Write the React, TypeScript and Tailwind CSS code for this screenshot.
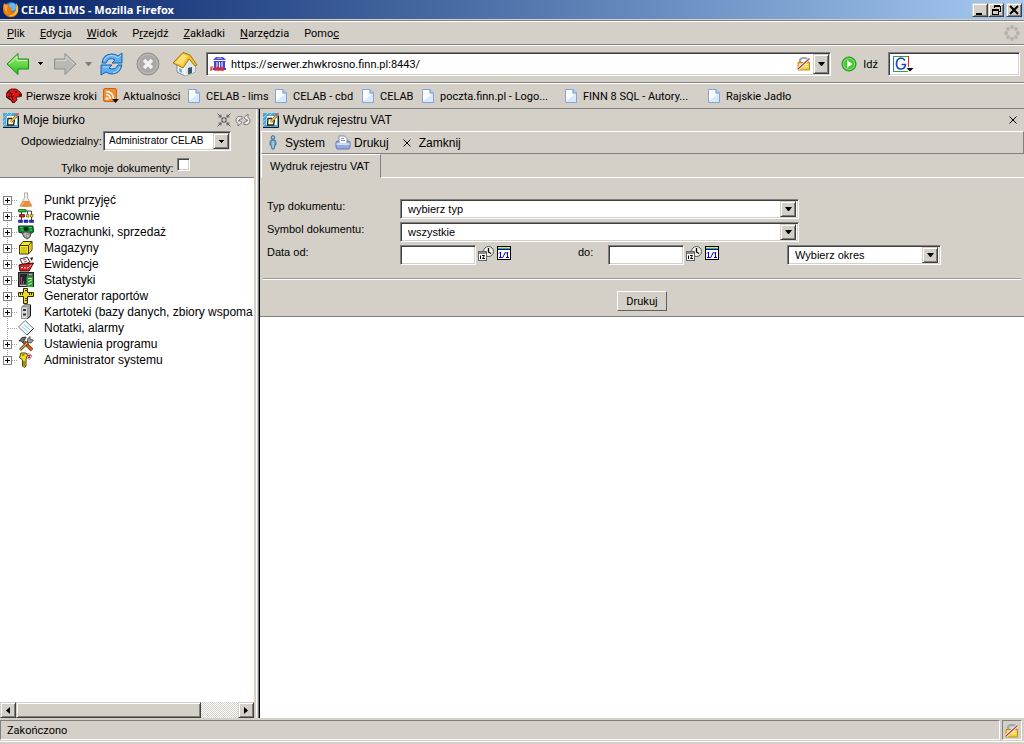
import { useState } from "react";
import type { ReactNode } from "react";

// ─── Shared bevels ─────────────────────────────────────────────────────────────

const SUNKEN =
  "border border-t-[#808080] border-l-[#808080] border-r-white border-b-white p-px shadow-[inset_1px_1px_0_#404040,inset_-1px_-1px_0_#d4d0c8]";
const RAISED =
  "border border-t-[#d4d0c8] border-l-[#d4d0c8] border-r-[#404040] border-b-[#404040] bg-[#d4d0c8] shadow-[inset_1px_1px_0_#ffffff,inset_-1px_-1px_0_#808080]";

// ─── Browser icons ─────────────────────────────────────────────────────────────

function FirefoxIcon() {
  return (
    <svg width="18" height="18" viewBox="0 0 18 18" aria-hidden>
      <circle cx="9" cy="8" r="7" fill="#2b6fc4" />
      <circle cx="10" cy="6" r="4" fill="#6db7ee" />
      <path d="M2 2 Q4 4 6 3 Q8 4 7 6 L10 7 Q8 10 11 11 Q15 10 14 5 Q18 9 15 13 Q12 17 7 16 Q1 14 1 8 Q1 4 2 2Z" fill="#e87a12" />
      <path d="M14 2 Q18 7 15 12 Q11 17 6 14 Q11 15 13 11 Q15 8 14 2Z" fill="#fbc83c" />
      <path d="M2 3 Q4 5 6 4 L5 8 Q4 11 7 13 Q2 12 2 3Z" fill="#f7a832" />
    </svg>
  );
}

function ArrowIcon({ back }: { back?: boolean }) {
  return back ? (
    <svg width="24" height="24" viewBox="0 0 24 24" aria-hidden>
      <defs>
        <linearGradient id="arrow-green" x1="0" y1="0" x2="0" y2="1">
          <stop offset="0" stopColor="#a8ee86" />
          <stop offset="1" stopColor="#29c013" />
        </linearGradient>
      </defs>
      <path d="M1 12 L12 1.5 V7 H22.500 V17 H12 V22.500Z" fill="url(#arrow-green)" stroke="#188a12" strokeLinejoin="round" />
      <path d="M3 12 L11 4.500 V8.500 H21" fill="none" stroke="#d2f8c2" />
    </svg>
  ) : (
    <svg width="24" height="24" viewBox="0 0 24 24" aria-hidden>
      <path d="M23 12 L12 1.5 V7 H1.500 V17 H12 V22.500Z" fill="#b9b8b5" stroke="#8f8e8b" strokeLinejoin="round" />
      <path d="M3 8.500 H13 V4.500 L21 12" fill="none" stroke="#d6d5d2" />
    </svg>
  );
}

function ReloadIcon() {
  return (
    <svg width="24" height="24" viewBox="0 0 24 24" aria-hidden>
      <g fill="#58aef2" stroke="#1e5fae" strokeLinejoin="round">
        <path d="M2 11 Q3 2 12 2 Q16 2 18 4 L22 1 V11 H12 L15 8 Q9 4 6 11Z" />
        <path d="M22 13 Q20 22 12 22 Q8 22 6 20 L1 23 V13 H12 L9 16 Q15 19 18 13Z" />
      </g>
      <path d="M4 9 Q6 4 11 3.500 Q15 3.500 18 6 L21 3 M3 15 H9 M13 21 Q18 20 20 15" fill="none" stroke="#b4defd" />
    </svg>
  );
}

function StopIcon() {
  return (
    <svg width="24" height="24" viewBox="0 0 24 24" aria-hidden>
      <circle cx="12" cy="12" r="11" fill="#a9a8a6" stroke="#8f8e8c" />
      <circle cx="12" cy="12" r="9.500" fill="none" stroke="#bebdbb" />
      <path d="M8 8 L16 16 M16 8 L8 16" stroke="#f2f1ef" strokeWidth="3.500" />
    </svg>
  );
}

function HomeIcon() {
  return (
    <svg width="26" height="26" viewBox="0 0 26 26" aria-hidden>
      <path d="M5 13 V21 L13 25 L23 21 V13 L17 7Z" fill="#f8f8f8" stroke="#76889c" />
      <path d="M13 15 L17 7 L23 13 V21 L13 25Z" fill="#dfe7ef" />
      <path d="M1 12 L11 1.500 L18 4 L25 14 L23 15 L17 8 L11 17Z" fill="#f3c331" stroke="#a2740a" strokeLinejoin="round" />
      <path d="M3 12 L11 3 L16 5 L10 14Z" fill="#fbdf72" />
      <path d="M16 23.500 V17 L20 16 V22Z" fill="#3f536b" />
      <path d="M7 17 V20.500 L10 22 V18Z" fill="#6db3ea" />
    </svg>
  );
}

function BankIcon() {
  return (
    <svg width="17" height="16" viewBox="0 0 17 16" aria-hidden>
      <path d="M3 4 L6 1 H13 L16 4Z M3.500 5 H15.500 V6 H3.500Z M4 6 H6.500 V12 H4Z M7.500 6 H9 V12 H7.500Z M10 6 H11.500 V12 H10Z M12.500 6 H15 V12 H12.500Z M3 12 H16 V14 H3Z" fill="#4648cc" />
      <path d="M6 3 L8 1.500 H11 L13 3Z" fill="#9d9eea" />
      <path d="M1 15 V11 H3.500 M1 13 H3 M5 11 V15 M7 15 V11 L9 15 V11 M11 15 V11 L13 15 V11" fill="none" stroke="#e32626" strokeWidth="1.200" />
    </svg>
  );
}

function LockIcon() {
  return (
    <svg width="14" height="15" viewBox="0 0 14 15" aria-hidden>
      <path d="M3 7 V4.500 Q3 2 7 2 Q11 2 11 4.500 V7" fill="none" stroke="#9aa4ab" strokeWidth="2.200" />
      <path d="M1 6.500 H12.500 V14 H1Z" fill="#f3cf42" stroke="#bd9118" />
      <path d="M2 8.500 H11 M2 10.500 H11" stroke="#fdf0a8" />
      <path d="M1 13 L12.500 2.500" stroke="#fff" strokeWidth="2.800" />
      <path d="M1 13 L12.500 2.500" stroke="#c23434" strokeWidth="1.200" />
    </svg>
  );
}

function GoIcon() {
  return (
    <svg width="16" height="16" viewBox="0 0 16 16" aria-hidden>
      <circle cx="8" cy="8" r="7" fill="#43c92f" stroke="#1c8a16" />
      <circle cx="8" cy="8" r="5.500" fill="none" stroke="#8ae57a" />
      <path d="M6 4 L11.500 8 L6 12Z" fill="#fff" />
    </svg>
  );
}

function GoogleIcon() {
  return (
    <svg width="22" height="18" viewBox="0 0 22 18" aria-hidden>
      <path d="M1.500 16.500 V1.500" stroke="#3b6fd4" />
      <path d="M1 1.500 H16 M1 16.500 H16" stroke="#2da436" />
      <path d="M16.500 1 V12" stroke="#df2b2b" />
      <path d="M13 5.500 Q11.500 3 8.800 3 Q4.500 3.500 4.500 8.700 Q4.500 14 8.800 14 Q13 14 13.500 9.500 H9.500" fill="none" stroke="#2148b8" strokeWidth="1.700" />
      <path d="M14.500 13 H21.500 L18 16.500Z" fill="#000" />
    </svg>
  );
}

function ThrobberIcon() {
  const dots = [
    [8, 2], [12, 4], [14, 8], [12, 12], [8, 14], [4, 12], [2, 8], [4, 4],
  ];
  return (
    <svg width="16" height="16" viewBox="0 0 16 16" aria-hidden>
      {dots.map(([x, y]) => (
        <circle key={`${x}-${y}`} cx={x} cy={y} r="1.900" fill="#b3b1ad" />
      ))}
    </svg>
  );
}

function PageIcon() {
  return (
    <svg width="12" height="14" viewBox="0 0 12 14" className="shrink-0" aria-hidden>
      <path d="M.5 .5 H8 L11.500 4 V13.500 H.5Z" fill="#d9e9fc" stroke="#7fa5dc" />
      <path d="M1 1 H7 V5 H10 L1 12Z" fill="#fff" />
      <path d="M8 .5 V4 H11.500" fill="#b8d4f5" stroke="#6f9ad8" />
    </svg>
  );
}

function MozillaIcon() {
  return (
    <svg width="16" height="16" viewBox="0 0 16 16" className="shrink-0" aria-hidden>
      <path d="M0 6 L2 3 L5 1 H10 L13 3 L15 5 L16 8 L13 9 L10 9 L11 12 L8 15 L5 12 L3 11 L0 9Z" fill="#e01616" stroke="#3d0606" strokeWidth=".8" />
      <path d="M1 5 L4 3 M3 7 L5 4 M5 9 L6 5 M7 12 L6 9 L8 8 M2 9 L4 8" fill="none" stroke="#3d0606" />
      <path d="M9 4 H11 M13 7 H15" stroke="#000" />
      <path d="M0 8 L3 11 L5 12 L7 15" fill="none" stroke="#1a0202" />
    </svg>
  );
}

function RssIcon() {
  return (
    <svg width="17" height="16" viewBox="0 0 17 16" className="shrink-0" aria-hidden>
      <rect x=".5" y=".5" width="13" height="13" rx="1.500" fill="#f28c2c" stroke="#c96512" />
      <circle cx="4" cy="10.500" r="1.500" fill="#fff" />
      <path d="M3 6.500 Q7 6.500 7.500 11 M3 3.500 Q10 3.500 10.500 11" fill="none" stroke="#fff" strokeWidth="1.500" />
      <path d="M9 11 H16 L12.500 15Z" fill="#111" />
    </svg>
  );
}

function DownTriangle({ gray }: { gray?: boolean }) {
  return (
    <svg width="7" height="4" viewBox="0 0 7 4" aria-hidden>
      <path d="M0 0 H7 L4 4 H3Z" fill={gray ? "#808080" : "#000"} />
    </svg>
  );
}

function SmallTriangle() {
  return (
    <svg width="5" height="3" viewBox="0 0 5 3" shapeRendering="crispEdges" aria-hidden>
      <path d="M0 0 H5 V1 H4 V2 H3 V3 H2 V2 H1 V1 H0Z" />
    </svg>
  );
}

function CrossIcon() {
  return (
    <svg width="8" height="8" viewBox="0 0 8 8" aria-hidden>
      <path d="M.5 .5 L7.500 7.500 M7.500 .5 L.5 7.500" stroke="#000" />
    </svg>
  );
}

// ─── Application icons ─────────────────────────────────────────────────────────

function DeskIcon() {
  return (
    <svg width="16" height="15" viewBox="0 0 16 15" aria-hidden>
      <rect width="16" height="15" fill="#4aa9d6" />
      <path d="M0 9 L9 0 M0 5 L5 0 M0 13 L4 9 M12 3 L15 0" stroke="#d4eef6" strokeDasharray="1 1" />
      <path d="M4 3 H11 L14 5 V12 H3Z" fill="#fbf6dc" />
      <path d="M5 5.500 H9 M5 5 L4.500 12 H10.500 L11.500 7" fill="none" stroke="#26241c" strokeWidth="1.300" />
      <path d="M8 9 L14 2" stroke="#5a4210" strokeWidth="2.600" />
      <path d="M8 9 L14 2" stroke="#f2cc4a" strokeWidth="1.400" />
      <path d="M13 3 L15 0" stroke="#e86050" strokeWidth="2" />
      <path d="M0 14.500 H15.500 V3" fill="none" stroke="#101820" />
    </svg>
  );
}

function ShrinkIcon() {
  return (
    <svg width="14" height="14" viewBox="0 0 14 14" fill="none" stroke="#555" aria-hidden>
      <rect x="5" y="5" width="4" height="4" />
      <path d="M.5 .5 L4 4 M13.500 .5 L10 4 M.5 13.500 L4 10 M13.500 13.500 L10 10" />
      <path d="M4 1.500 V4 H1.500 M10 1.500 V4 H12.500 M1.500 10 H4 V12.500 M12.500 10 H10 V12.500" />
    </svg>
  );
}

function RefreshIcon() {
  return (
    <svg width="16" height="15" viewBox="0 0 16 15" aria-hidden>
      <g fill="#ececea" stroke="#777" strokeLinejoin="round">
        <path d="M7 3.500 Q2 2.500 1 6.500 Q.5 9 3 10.500 V13 L7 9.500 L4 7 V8.500 Q3 6 7 6Z" />
        <path d="M9 11.500 Q14 12.500 15 8.500 Q15.500 6 13 4.500 V1 L9 4.500 L12 8 V6.500 Q13 9 9 9Z" />
      </g>
    </svg>
  );
}

function PersonIcon() {
  return (
    <svg width="8" height="15" viewBox="0 0 8 15" aria-hidden>
      <circle cx="4" cy="2.500" r="1.800" fill="#9cc8e4" stroke="#34658b" />
      <path d="M2 5 H6 L7 7 V10 H6 L5 14 H3 L2 10 H1 V7Z" fill="#72a9cf" stroke="#34658b" strokeWidth=".8" />
      <path d="M4 6 V13" stroke="#bfe1f4" />
    </svg>
  );
}

function PrinterIcon() {
  return (
    <svg width="16" height="15" viewBox="0 0 16 15" aria-hidden>
      <path d="M1 7 L3 6 H13 L15 7 V12 L14 14 H2 L1 12Z" fill="#94abe2" stroke="#6079b5" />
      <path d="M4 8.500 V1 H9.500 L12 3.500 V8.500Z" fill="#fff" stroke="#7c8db5" />
      <path d="M6 3.500 H9 M6 5.500 H10" stroke="#7e93c2" />
      <path d="M1.500 9 H14.500" stroke="#e6edfb" strokeWidth="1.500" />
    </svg>
  );
}

function ClockIcon() {
  return (
    <svg width="16" height="15" viewBox="0 0 16 15" aria-hidden>
      <circle cx="10.500" cy="5.500" r="5" fill="#f2eee4" stroke="#555" />
      <path d="M10.500 2 V6 L13 7.500" fill="none" stroke="#000" strokeWidth="1.300" />
      <rect x=".5" y="5.500" width="8" height="9" fill="#fff" stroke="#666" />
      <rect x="1" y="6" width="7" height="2" fill="#8b8b8b" />
      <path d="M2.500 9.500 V13 M4 9.500 H6.500 L4.500 12.500 H7" fill="none" stroke="#000" />
    </svg>
  );
}

function CalendarIcon() {
  return (
    <svg width="14" height="14" viewBox="0 0 14 14" aria-hidden>
      <rect x=".5" y=".5" width="13" height="13" fill="#fff" stroke="#000" />
      <rect x="1" y="1" width="12" height="1" fill="#e6e76a" />
      <rect x="1" y="2" width="12" height="1" fill="#2aa6b8" />
      <rect x="1" y="3" width="12" height="1" fill="#102060" />
      <path d="M2 7.500 L3.500 6 V12 M2 11.500 H5 M5.500 12 L8.500 6 M9 7.500 L10.500 6 V12 M9 11.500 H12" fill="none" stroke="#0000e0" />
    </svg>
  );
}

function TreeSvg({ children }: { children: ReactNode }) {
  return (
    <svg width="16" height="16" viewBox="0 0 16 16" className="shrink-0" aria-hidden>
      {children}
    </svg>
  );
}

const TREE: { label: string; leaf?: boolean; icon: ReactNode }[] = [
  {
    label: "Punkt przyjęć",
    icon: (
      <TreeSvg>
        <path d="M6 1 H10 M6.500 1 V6 L2 14 H14 L9.500 6 V1" fill="#f4f2ee" stroke="#b5aea5" />
        <path d="M5 9 H11 L14 14 Q8 16 2 14Z" fill="#ee8a3c" />
        <path d="M6 10 L4 13" stroke="#fbc694" />
      </TreeSvg>
    ),
  },
  {
    label: "Pracownie",
    icon: (
      <TreeSvg>
        <path d="M3.500 4 V13 M7 3 H13.500 V12 M9.500 3 V6" fill="none" stroke="#444" />
        <path d="M.5 1.500 H8 V4 H.5Z" fill="#1fc03a" stroke="#064d12" strokeWidth=".7" />
        <path d="M1.500 6.500 H6.500 V9 H1.500Z" fill="#d9202a" stroke="#5a0508" strokeWidth=".7" />
        <path d="M8.500 6.500 H11 V9 H8.500Z M12.500 6.500 H15 V9 H12.500Z" fill="#f5df2c" stroke="#6b6000" strokeWidth=".7" />
        <path d="M.5 12 H4.500 V14.500 H.5Z M6 12 H10 V14.500 H6Z M11.500 12 H15.500 V14.500 H11.500Z" fill="#2432c8" stroke="#080c50" strokeWidth=".5" />
      </TreeSvg>
    ),
  },
  {
    label: "Rozrachunki, sprzedaż",
    icon: (
      <TreeSvg>
        <path d="M.5 2 H15 L15.500 8 L12 10 L1 8.500Z" fill="#128a2c" stroke="#0b3d18" />
        <path d="M2 3.500 H5 M3 6 H6 M11 3.500 H14 M12 6 H14" stroke="#50cf5c" />
        <ellipse cx="8" cy="5" rx="2.500" ry="2" fill="#0a2d12" />
        <path d="M4 9 L8 7.500 L13 9 L12 13 L9 15 L6 13Z" fill="#989898" stroke="#4c4c4c" />
        <path d="M6 10 H8 M9 12 H11 M7 12 H8" stroke="#e0e0e0" />
      </TreeSvg>
    ),
  },
  {
    label: "Magazyny",
    icon: (
      <TreeSvg>
        <path d="M1.500 5.500 L5 1.500 H14 V10 L10.500 14 H1.500Z" fill="#f5e528" stroke="#3a3600" />
        <path d="M1.500 5.500 H10.500 V14 M10.500 5.500 L14 1.500" fill="none" stroke="#3a3600" />
        <path d="M3 8 H9 M3 10 H9 M3 12 H9" stroke="#b3a818" />
        <path d="M11.500 6 L13.500 4 V9 L11.500 11.500Z" fill="#d3c31c" />
      </TreeSvg>
    ),
  },
  {
    label: "Ewidencje",
    icon: (
      <TreeSvg>
        <path d="M2 3 L9 1 L12 6 L5 9Z" fill="#fff" stroke="#333" />
        <path d="M5 4 L8 3 M6 6 L9 5" stroke="#b44" />
        <path d="M12 2 L15 1 L14 5Z" fill="#222" />
        <path d="M1 9 L5 8 L15.500 7 L11 15 H2Z" fill="#d42323" stroke="#3f0707" />
        <path d="M3 11.500 L10 12 L14 8.500" fill="none" stroke="#fff" strokeDasharray="2 1" />
      </TreeSvg>
    ),
  },
  {
    label: "Statystyki",
    icon: (
      <TreeSvg>
        <rect x=".5" y=".5" width="15" height="14" fill="#5a6463" stroke="#1b1f1f" />
        <rect x="2" y="2" width="7" height="10" fill="#1e2a30" />
        <path d="M3.500 12 V5 M5.500 12 V9" stroke="#ca3f62" />
        <rect x="8.500" y="5" width="6.500" height="10" fill="#2da03a" />
        <path d="M10 6.500 H14 M10 10 L14 8 M10 13 L14 11" stroke="#c5f2a8" />
        <path d="M11 2.500 H14" stroke="#9bd07a" />
        <path d="M2 13.500 H8" stroke="#c9cdcc" />
      </TreeSvg>
    ),
  },
  {
    label: "Generator raportów",
    icon: (
      <TreeSvg>
        <path d="M5.500 .5 H9.500 V4.500 H15.500 V8.500 H9.500 V15.500 H5.500 V8.500 H.5 V4.500 H5.500Z" fill="#f3d918" stroke="#332c00" />
        <path d="M2.500 5 V7 M4.500 5 V7 M11.500 5 V7 M13.500 5 V7 M7 2.500 H9 M7 10.500 H9 M7 12.500 H9" stroke="#332c00" />
      </TreeSvg>
    ),
  },
  {
    label: "Kartoteki (bazy danych, zbiory wspoma",
    icon: (
      <TreeSvg>
        <path d="M3.500 3 L7 .5 H12.500 V12 L9.500 14.500 H3.500Z" fill="#a9a9a9" stroke="#777" />
        <path d="M3.500 3 H9.500 V14.500 H3.500Z" fill="#dcdcdc" stroke="#888" strokeWidth=".6" />
        <path d="M5 5 H8 V7 H5Z M5 9.500 H8 V11.500 H5Z" fill="#333" />
        <path d="M12.500 1 V12 L9.500 14.500" fill="none" stroke="#111" />
      </TreeSvg>
    ),
  },
  {
    label: "Notatki, alarmy",
    leaf: true,
    icon: (
      <TreeSvg>
        <path d="M.5 7 L7 .5 L15.500 8.500 L9 15Z" fill="#eefafa" stroke="#777" />
        <path d="M4 6.500 L10 12 M6 4.500 L12 10" stroke="#8fd0dc" />
        <path d="M9 15 L15.500 8.500" stroke="#222" />
      </TreeSvg>
    ),
  },
  {
    label: "Ustawienia programu",
    icon: (
      <TreeSvg>
        <path d="M6 6 L14 14" stroke="#6b2b10" strokeWidth="3.500" />
        <path d="M6 6 L14 14" stroke="#e0602a" strokeWidth="1.800" />
        <path d="M1 5 L4 1.500 L8 1 L6.500 4 L5 7 L3 5Z" fill="#6d6d6d" stroke="#222" strokeWidth=".8" />
        <path d="M2 14 L10 6" stroke="#3a2c10" strokeWidth="2.600" />
        <path d="M2 14 L10 6" stroke="#d9b54a" strokeWidth="1.200" />
        <path d="M9.500 6.500 V3 L12 .5 V3.500 L15.500 4 L13 7Z" fill="#a5a5a5" stroke="#333" strokeWidth=".8" />
      </TreeSvg>
    ),
  },
  {
    label: "Administrator systemu",
    icon: (
      <TreeSvg>
        <path d="M10 1 L14 4 L11.500 7.500 L8 5Z" fill="#fff" stroke="#888" strokeWidth=".8" />
        <path d="M10 3 L12.500 5.500 M12.500 3 L10 5.500" stroke="#d12020" strokeWidth="1.400" />
        <path d="M3 1 H8 L9.500 3.500 L8 7 V14 L6 15.500 L4.500 14 V8 L1.500 5.500Z" fill="#f1d92a" stroke="#4f4600" />
        <path d="M4 3 H6.500 M6 9 V14" stroke="#4f4600" />
      </TreeSvg>
    ),
  },
];

// ─── Controls ──────────────────────────────────────────────────────────────────

function SelectBox({
  id,
  label,
  value,
  className,
  small,
}: {
  id: string;
  label?: string;
  value: string;
  className: string;
  small?: boolean;
}) {
  return (
    <div className={`relative flex bg-white ${SUNKEN} ${className}`}>
      <select
        id={id}
        aria-label={label}
        className={`min-w-0 flex-1 appearance-none bg-transparent leading-4 outline-none ${
          small ? "pl-1 text-[10px]" : "pl-1.5 text-[11px]"
        }`}
      >
        <option>{value}</option>
      </select>
      <span
        className={`pointer-events-none absolute inset-y-px flex w-4 items-center justify-center ${RAISED} ${
          small ? "right-px" : "right-0.5"
        }`}
      >
        {small ? <SmallTriangle /> : <DownTriangle />}
      </span>
    </div>
  );
}

function DateField({ id }: { id: string }) {
  return (
    <div className="flex items-start">
      <input id={id} type="text" className={`h-5 w-[76px] bg-white text-[11px] outline-none ${SUNKEN}`} />
      <button aria-label="Data i godzina" className="ml-0.5 pt-px">
        <ClockIcon />
      </button>
      <button aria-label="Kalendarz" className="ml-[3px] pt-px">
        <CalendarIcon />
      </button>
    </div>
  );
}

// ─── Browser chrome ────────────────────────────────────────────────────────────

const MENU = [
  ["", "P", "lik"],
  ["", "E", "dycja"],
  ["", "W", "idok"],
  ["P", "r", "zejdź"],
  ["", "Z", "akładki"],
  ["", "N", "arzędzia"],
  ["Pomo", "c", ""],
];

const BOOKMARKS = [
  { label: "CELAB - lims", width: "w-[87px]" },
  { label: "CELAB - cbd", width: "w-[87px]" },
  { label: "CELAB", width: "w-[60px]" },
  { label: "poczta.finn.pl - Logo...", width: "w-[143px]" },
  { label: "FINN 8 SQL - Autory...", width: "w-[143px]" },
  { label: "Rajskie Jadło", width: "w-[90px]" },
];

function TitleBar() {
  return (
    <div className="flex h-5 items-center border-b border-[#d4d0c8] bg-linear-to-r from-[#0a246a] to-[#a6caf0] px-0.5">
      <FirefoxIcon />
      <h1 className="ml-px flex-1 pt-0.5 font-['Noto_Sans',sans-serif] text-[11px] font-bold text-white">CELAB LIMS - Mozilla Firefox</h1>
      <button aria-label="Minimalizuj" className={`flex h-[14px] w-4 justify-center ${RAISED}`}>
        <svg width="12" height="12" viewBox="0 0 12 12"><path d="M2 9 H8 V11 H2Z" /></svg>
      </button>
      <button aria-label="Przywróć" className={`flex h-[14px] w-4 justify-center ${RAISED}`}>
        <svg width="12" height="12" viewBox="0 0 12 12" fill="none" stroke="#000" shapeRendering="crispEdges">
          <path d="M4 4 V2 H10 V7 H8 M4 1.500 H10 M2 5 H8 V10 H2Z M2 6 H8" />
        </svg>
      </button>
      <button aria-label="Zamknij okno" className={`ml-0.5 flex h-[14px] w-4 justify-center ${RAISED}`}>
        <svg width="12" height="12" viewBox="0 0 12 12"><path d="M2 2 L10 10 M10 2 L2 10" stroke="#000" strokeWidth="2" /></svg>
      </button>
    </div>
  );
}

function BrowserChrome() {
  return (
    <header className="font-[Roboto,sans-serif] text-[11px]">
      <TitleBar />
      <nav className="flex h-6 items-center gap-[15px] border-t border-[#808080] pr-1 pl-[7px] shadow-[inset_0_1px_0_#ffffff]">
        {MENU.map(([before, key, after]) => (
          <button key={before + key + after} className="pt-1">
            {before}
            <span className="underline">{key}</span>
            {after}
          </button>
        ))}
        <span className="ml-auto">
          <ThrobberIcon />
        </span>
      </nav>
      <div className="flex h-[38px] items-center border-t border-[#808080] pr-1 pl-1.5 shadow-[inset_0_1px_0_#ffffff]">
        <button aria-label="Wstecz"><ArrowIcon back /></button>
        <span className="ml-2"><SmallTriangle /></span>
        <button aria-label="Dalej" className="ml-2.5"><ArrowIcon /></button>
        <span className="ml-2"><DownTriangle gray /></span>
        <button aria-label="Odśwież" className="ml-2"><ReloadIcon /></button>
        <button aria-label="Zatrzymaj" className="ml-3"><StopIcon /></button>
        <button aria-label="Strona startowa" className="ml-3"><HomeIcon /></button>
        <div className={`ml-2 flex h-6 flex-1 items-center bg-white ${SUNKEN}`}>
          <span className="ml-0.5"><BankIcon /></span>
          <input aria-label="Adres" defaultValue="https://serwer.zhwkrosno.finn.pl:8443/" className="ml-1 min-w-0 flex-1 bg-transparent pt-1 outline-none" />
          <LockIcon />
          <button aria-label="Historia adresów" className={`ml-0.5 flex h-5 w-4 items-center justify-center ${RAISED}`}>
            <DownTriangle />
          </button>
        </div>
        <button className="ml-2.5 flex items-center gap-1.5">
          <GoIcon />
          <span className="pt-1">Idź</span>
        </button>
        <div className={`ml-2.5 flex h-6 w-[132px] items-center bg-white ${SUNKEN}`}>
          <span className="ml-0.5"><GoogleIcon /></span>
          <input aria-label="Szukaj" className="min-w-0 flex-1 outline-none" />
        </div>
      </div>
      <nav className="flex h-[27px] items-center border-y border-[#808080] pl-1.5 shadow-[inset_0_1px_0_#ffffff]">
        <a href="#pierwsze-kroki" className="flex w-[97px] items-center gap-1 whitespace-nowrap">
          <MozillaIcon />
          <span className="pt-1">Pierwsze kroki</span>
        </a>
        <a href="#aktualnosci" className="flex w-[85px] items-center gap-[3px] whitespace-nowrap">
          <RssIcon />
          <span className="pt-1">Aktualności</span>
        </a>
        {BOOKMARKS.map((b) => (
          <a key={b.label} href="#zakladka" className={`flex items-center gap-1.5 whitespace-nowrap ${b.width}`}>
            <PageIcon />
            <span className="pt-1">{b.label}</span>
          </a>
        ))}
      </nav>
    </header>
  );
}

// ─── Sidebar ───────────────────────────────────────────────────────────────────

function Sidebar() {
  const [onlyMine, setOnlyMine] = useState(false);

  return (
    <aside className="flex w-[254px] shrink-0 flex-col bg-white">
      <div className="h-[69px] border-b border-[#808080] bg-[#d4d0c8]">
        <div className="flex h-[22px] items-center px-[3px]">
          <DeskIcon />
          <h2 className="ml-1 flex-1 text-xs">Moje biurko</h2>
          <button aria-label="Zwiń" className="mr-1"><ShrinkIcon /></button>
          <button aria-label="Odśwież drzewo"><RefreshIcon /></button>
        </div>
        <div className="flex items-center pl-[21px]">
          <label htmlFor="owner" className="w-[82px] text-[11px]">Odpowiedzialny:</label>
          <SelectBox id="owner" value="Administrator CELAB" className="h-5 w-32" small />
        </div>
        <div className="flex items-start pt-[7px] pl-[61px]">
          <label htmlFor="only-mine" className="w-[116px] pt-0.5 text-[11px] leading-4">Tylko moje dokumenty:</label>
          <input
            id="only-mine"
            type="checkbox"
            checked={onlyMine}
            onChange={(e) => setOnlyMine(e.target.checked)}
            className={`size-[13px] appearance-none bg-white checked:bg-[#0a246a] ${SUNKEN}`}
          />
        </div>
      </div>

      <ul className="flex-1 overflow-hidden pt-3.5 text-xs leading-4">
        {TREE.map((node, i) => (
          <li key={node.label} className="flex h-4 items-center pl-[3px] whitespace-nowrap">
            <svg width="15" height="16" viewBox="0 0 15 16" shapeRendering="crispEdges" className="shrink-0" aria-hidden>
              <path
                d={i === TREE.length - 1 ? "M4.500 0 V8" : i === 0 ? "M4.500 6 V16" : "M4.500 0 V16"}
                stroke="#a0a0a0"
                strokeDasharray="1 1"
              />
              <path d="M5 8.500 H14" stroke="#a0a0a0" strokeDasharray="1 1" />
              {!node.leaf && (
                <>
                  <rect x=".5" y="4.500" width="8" height="8" fill="#fff" stroke="#808080" />
                  <path d="M2 8.500 H7 M4.500 6 V11" stroke="#000" />
                </>
              )}
            </svg>
            {node.icon}
            <a href="#drzewo" className="ml-2.5">{node.label}</a>
          </li>
        ))}
      </ul>

      <div className="flex h-4 bg-[repeating-conic-gradient(#ffffff_0_25%,#d4d0c8_0_50%)] bg-size-[2px_2px]">
        <button aria-label="Przewiń w lewo" className={`flex w-4 items-center justify-center ${RAISED}`}>
          <svg width="4" height="7" viewBox="0 0 4 7"><path d="M4 0 V7 L0 3.500Z" /></svg>
        </button>
        <div className={`w-[185px] ${RAISED}`} />
        <button aria-label="Przewiń w prawo" className={`ml-auto flex w-4 items-center justify-center ${RAISED}`}>
          <svg width="4" height="7" viewBox="0 0 4 7"><path d="M0 0 V7 L4 3.500Z" /></svg>
        </button>
      </div>
    </aside>
  );
}

// ─── VAT register form ─────────────────────────────────────────────────────────

function VatPanel() {
  return (
    <main className="flex min-w-0 flex-1 flex-col bg-white">
      <section className="border-b border-[#808080] bg-[#d4d0c8]">
        <div className="flex h-[22px] items-center px-[3px]">
          <DeskIcon />
          <h2 className="ml-1 flex-1 text-xs">Wydruk rejestru VAT</h2>
          <button aria-label="Zamknij kartę" className="mr-1">
            <CrossIcon />
          </button>
        </div>

        <div className="ml-px flex h-[23px] items-center border border-t-white border-r-[#808080] border-b-[#808080] border-l-white pl-[7px] text-xs">
          <button className="flex items-center gap-2"><PersonIcon />System</button>
          <button className="ml-2.5 flex items-center gap-[3px]"><PrinterIcon />Drukuj</button>
          <button className="ml-3.5 flex items-center gap-2">
            <CrossIcon />
            Zamknij
          </button>
        </div>

        <div className="ml-px flex h-6" role="tablist">
          <button role="tab" aria-selected className="border border-t-white border-r-[#808080] border-b-[#d4d0c8] border-l-white pr-2.5 pl-2 text-[11px] whitespace-nowrap">
            Wydruk rejestru VAT
          </button>
          <div className="flex-1 border-b border-white" />
        </div>

        <form className="pt-[21px]" onSubmit={(e) => e.preventDefault()}>
          <div className="grid grid-cols-[133px_1fr] gap-y-[3px] pl-[7px] text-[11px] leading-[15px]">
            <label htmlFor="doc-type">Typ dokumentu:</label>
            <SelectBox id="doc-type" value="wybierz typ" className="h-5 w-[399px]" />
            <label htmlFor="doc-symbol">Symbol dokumentu:</label>
            <SelectBox id="doc-symbol" value="wszystkie" className="h-5 w-[399px]" />
            <label htmlFor="date-from">Data od:</label>
            <div className="flex">
              <DateField id="date-from" />
              <label htmlFor="date-to" className="ml-[67px] w-[30px]">do:</label>
              <DateField id="date-to" />
              <SelectBox id="period" label="Okres" value="Wybierz okres" className="ml-[68px] h-5 w-[154px]" />
            </div>
          </div>
          <hr className="mx-[3px] mt-[13px] h-0.5 border-t border-b border-t-[#989898] border-b-white" />
          <div className="flex justify-center pt-[11px] pb-[5px]">
            <button className="h-5 w-[50px] border border-t-white border-r-[#606060] border-b-[#606060] border-l-white pt-0.5 font-[Roboto,sans-serif] text-[11px]">
              Drukuj
            </button>
          </div>
        </form>
      </section>
    </main>
  );
}

// ─── Page ──────────────────────────────────────────────────────────────────────

export default function App() {
  return (
    <div className="flex min-h-screen flex-col bg-[#d4d0c8] font-['Liberation_Sans',Arial,sans-serif] text-black">
      <BrowserChrome />
      <div className="flex flex-1">
        <Sidebar />
        <div className="flex w-1.5 shrink-0 cursor-col-resize">
          <div className="w-0.5" />
          <div className="w-px bg-white" />
          <div className="w-px" />
          <div className="w-px bg-[#808080]" />
          <div className="w-px bg-black" />
        </div>
        <VatPanel />
      </div>
      <footer className="border-b-2 border-[#d4d0c8] pt-0.5 font-[Roboto,sans-serif] text-[11px]">
        <div className="flex h-5 gap-0.5 pr-0.5">
          <div className="flex flex-1 items-center border border-t-[#808080] border-r-white border-b-white border-l-[#808080] pt-0.5 pl-1.5">Zakończono</div>
          <div className="flex w-5 items-center justify-center border border-t-[#808080] border-r-white border-b-white border-l-[#808080]">
            <LockIcon />
          </div>
        </div>
        <div className="mt-px h-px bg-white" />
      </footer>
    </div>
  );
}
